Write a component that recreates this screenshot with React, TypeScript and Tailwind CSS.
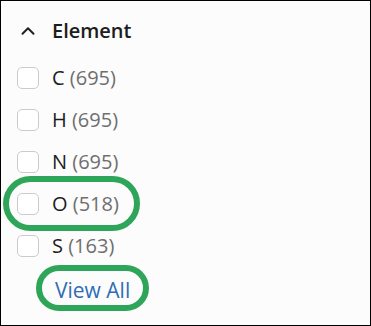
import { ChevronUp } from "lucide-react"

const elements = [
  { symbol: "C", count: 695 },
  { symbol: "H", count: 695 },
  { symbol: "N", count: 695 },
  { symbol: "O", count: 518 },
  { symbol: "S", count: 163 },
]

function FilterRow({ symbol, count }: { symbol: string; count: number }) {
  return (
    <label className="flex h-[42px] items-center gap-[13px]">
      <span className="block h-[22px] w-[22px] rounded-[5px] border border-[#cbcbcb] bg-white" />
      <span className="text-[20px] leading-none text-[#1d1d1d]">
        {symbol} <span className="text-[#6f6f6f]">({count})</span>
      </span>
    </label>
  )
}

export default function App() {
  return (
    <div
      className="relative h-[326px] w-[371px] overflow-hidden border border-black bg-[#fcfcfc] pl-[16px] pt-[18px]"
      style={{ fontFamily: '"Open Sans", "Noto Sans", sans-serif' }}
    >
      <div className="flex h-[24px] items-center gap-[13px]">
        <ChevronUp size={22} strokeWidth={2.2} className="text-[#222]" />
        <span className="text-[20px] font-semibold leading-none text-[#1d1d1d]">Element</span>
      </div>

      <div className="mt-[14px] flex flex-col">
        {elements.map((el) => (
          <FilterRow key={el.symbol} symbol={el.symbol} count={el.count} />
        ))}
      </div>

      <div className="flex h-[46px] items-center pl-[38px]">
        <a className="text-[21px] leading-none text-[#2d6db5]">View All</a>
      </div>

      {/* annotation highlights */}
      <div className="absolute left-[2px] top-[175px] h-[55px] w-[137px] rounded-full border-[6px] border-[#2fa55a]" />
      <div className="absolute left-[35px] top-[264px] h-[46px] w-[113px] rounded-full border-[6px] border-[#2fa55a]" />
    </div>
  )
}
